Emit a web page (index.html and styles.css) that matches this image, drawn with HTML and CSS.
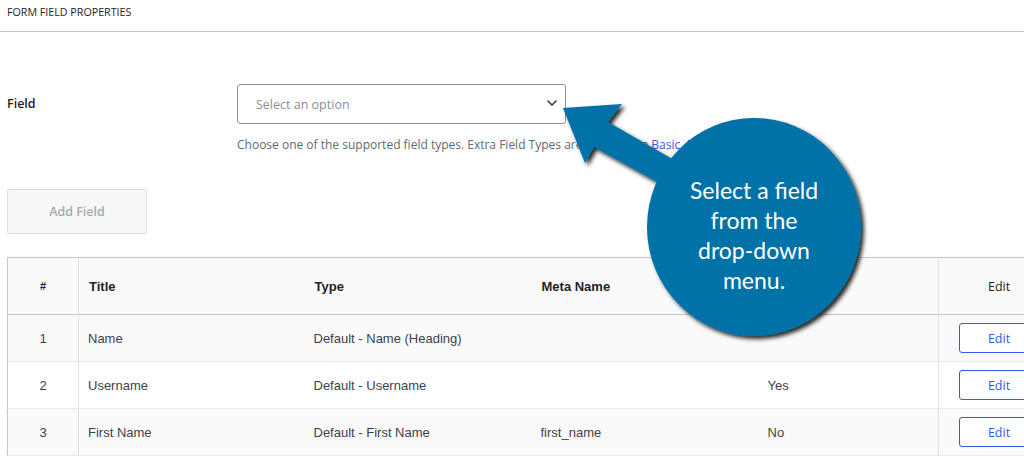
FILE: index.html
```html
<!DOCTYPE html>
<html>
<head>
<meta charset="utf-8">
<link rel="stylesheet" href="styles.css">
</head>
<body>
<div class="page">
  <div class="section-title">FORM FIELD PROPERTIES</div>
  <div class="field-row">
    <label class="field-label">Field</label>
    <div class="field-control">
      <div class="select">
        <span class="placeholder">Select an option</span>
        <svg class="chevron" width="12" height="8" viewBox="0 0 12 8"><path d="M1.5 1.5 L6 6 L10.5 1.5" fill="none" stroke="#3c434a" stroke-width="1.6"/></svg>
      </div>
      <p class="desc">Choose one of the supported field types. Extra Field Types are available in <a class="link">Basic, Pro and Business</a> plans.</p>
    </div>
  </div>
  <button class="add-btn">Add Field</button>
  <table class="fields">
    <colgroup>
      <col class="c-num"><col class="c-title"><col class="c-type"><col class="c-meta"><col class="c-req"><col class="c-edit">
    </colgroup>
    <thead>
      <tr>
        <th class="num">#</th>
        <th>Title</th>
        <th>Type</th>
        <th>Meta Name</th>
        <th></th>
        <th class="edit-h">Edit</th>
      </tr>
    </thead>
    <tbody>
      <tr class="alt">
        <td class="num">1</td><td>Name</td><td>Default - Name (Heading)</td><td></td><td></td>
        <td class="edit"><button class="edit-btn">Edit</button></td>
      </tr>
      <tr>
        <td class="num">2</td><td>Username</td><td>Default - Username</td><td></td><td>Yes</td>
        <td class="edit"><button class="edit-btn">Edit</button></td>
      </tr>
      <tr class="alt">
        <td class="num">3</td><td>First Name</td><td>Default - First Name</td><td>first_name</td><td>No</td>
        <td class="edit"><button class="edit-btn">Edit</button></td>
      </tr>
    </tbody>
  </table>
</div>
<div class="callout">
  <svg class="callout-shape" width="340" height="270" viewBox="0 0 340 270">
    <defs>
      <filter id="sh" x="-10%" y="-10%" width="130%" height="130%">
        <feDropShadow dx="3" dy="3" stdDeviation="2.2" flood-color="#000" flood-opacity="0.85"/>
      </filter>
    </defs>
    <g filter="url(#sh)" fill="#0072a8">
      <polygon points="13,13 72,9 58,27 150,80 140,105 44,52 35,68"/>
      <ellipse cx="204" cy="132" rx="107" ry="109"/>
    </g>
  </svg>
  <div class="callout-text">Select a field<br>from the<br>drop-down<br>menu.</div>
</div>
</body>
</html>
```
FILE: styles.css
```css
html, body {
  margin: 0;
  padding: 0;
  background: #fff;
  overflow: hidden;
}
body {
  width: 1024px;
  height: 456px;
  position: relative;
  font-family: "Open Sans", "Liberation Sans", sans-serif;
  color: #1d2327;
}
.page {
  width: 1024px;
}
.section-title {
  height: 32px;
  box-sizing: border-box;
  padding: 4px 0 0 7px;
  font-size: 10.7px;
  line-height: 16px;
  color: #1d2327;
  border-bottom: 1px solid #c3c4c7;
}
.field-row {
  display: flex;
  margin-top: 52px;
}
.field-label {
  width: 230px;
  padding-left: 7px;
  font-size: 12.5px;
  font-weight: 600;
  line-height: 40px;
  color: #1d2327;
}
.field-control {
  display: flex;
  flex-direction: column;
}
.select {
  width: 329px;
  height: 40px;
  box-sizing: border-box;
  border: 1px solid #8c8f94;
  border-radius: 3px;
  display: flex;
  align-items: center;
  justify-content: space-between;
  padding: 0 7px 0 18px;
}
.placeholder {
  font-size: 12.5px;
  color: #8c8f94;
}
.chevron {
  display: block;
  margin-top: -2px;
}
.desc {
  margin: 13px 0 0 0;
  font-size: 12px;
  line-height: 16px;
  color: #646970;
  white-space: nowrap;
}
.link {
  color: #3858e9;
}
.add-btn {
  display: block;
  margin: 36px 0 0 7px;
  width: 140px;
  height: 45px;
  box-sizing: border-box;
  background: #f6f7f7;
  border: 1px solid #dcdcde;
  border-radius: 2px;
  font-family: "Open Sans", sans-serif;
  font-size: 12.5px;
  font-weight: 600;
  color: #a7aaad;
  padding: 0;
}
.fields {
  margin: 23px 0 0 7px;
  width: 1060px;
  table-layout: fixed;
  border-collapse: collapse;
  border: 1px solid #c3c4c7;
  font-family: "Liberation Sans", Arial, sans-serif;
  font-size: 13px;
}
.c-num { width: 71px; }
.c-title { width: 226px; }
.c-type { width: 227px; }
.c-meta { width: 227px; }
.c-req { width: 180px; }
.c-edit { width: 129px; }
.fields thead tr {
  height: 57px;
  background: #fafafa;
  border-bottom: 1px solid #c3c4c7;
}
.fields th {
  text-align: left;
  padding: 0 0 0 10px;
  font-weight: bold;
  color: #1d2327;
}
.fields th.num {
  text-align: center;
  padding: 0;
  font-size: 11px;
  border-right: 1px solid #e2e2e2;
}
.fields th.edit-h {
  padding: 0 0 0 49px;
  border-left: 1px solid #e2e2e2;
  font-family: "Open Sans", sans-serif;
  font-weight: 500;
  font-size: 12.5px;
}
.fields tbody tr {
  height: 47px;
  border-bottom: 1px solid #e8e8e8;
  background: #fff;
}
.fields tbody tr.alt {
  background: #fafafa;
}
.fields td {
  padding: 0 0 0 9px;
  color: #3c434a;
}
.fields td.num {
  text-align: center;
  padding: 0;
  border-right: 1px solid #e2e2e2;
}
.fields td.edit {
  border-left: 1px solid #e2e2e2;
  padding: 0 0 0 20px;
}
.edit-btn {
  display: block;
  width: 80px;
  height: 30px;
  box-sizing: border-box;
  background: #fff;
  border: 1px solid #3858e9;
  border-radius: 3px;
  color: #3858e9;
  font-family: "Open Sans", sans-serif;
  font-size: 12.5px;
  padding: 0;
}
.callout {
  position: absolute;
  left: 550px;
  top: 95px;
  width: 340px;
  height: 270px;
}
.callout-shape {
  position: absolute;
  left: 0;
  top: 0;
}
.callout-text {
  position: absolute;
  left: 104px;
  top: 80px;
  width: 200px;
  text-align: center;
  font-family: Lato, "Open Sans", sans-serif;
  font-size: 23px;
  line-height: 30px;
  color: #fff;
}
```
